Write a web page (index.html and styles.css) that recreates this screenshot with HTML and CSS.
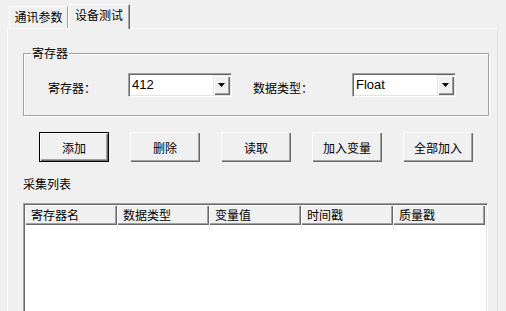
FILE: index.html
```html
<!DOCTYPE html>
<html lang="zh-CN">
<head>
<meta charset="utf-8">
<title>设备测试</title>
<link rel="stylesheet" href="styles.css">
</head>
<body>
<div class="window">
  <div class="tabs">
    <div class="tab">通讯参数</div>
    <div class="tab active">设备测试</div>
  </div>
  <div class="page">
    <div class="group">
      <div class="legend">寄存器</div>
      <div class="group-row">
        <span class="lbl lbl1">寄存器：</span>
        <div class="combo">
          <span class="combo-text">412</span>
          <span class="combo-btn"><svg width="7" height="4" viewBox="0 0 7 4"><polygon points="0,0 7,0 3.5,4" fill="#000"/></svg></span>
        </div>
        <span class="lbl lbl2">数据类型：</span>
        <div class="combo">
          <span class="combo-text">Float</span>
          <span class="combo-btn"><svg width="7" height="4" viewBox="0 0 7 4"><polygon points="0,0 7,0 3.5,4" fill="#000"/></svg></span>
        </div>
      </div>
    </div>
    <div class="buttons">
      <button class="btn default">添加</button>
      <button class="btn">删除</button>
      <button class="btn">读取</button>
      <button class="btn">加入变量</button>
      <button class="btn">全部加入</button>
    </div>
    <div class="caption">采集列表</div>
    <div class="list">
      <div class="list-header">
        <div class="col">寄存器名</div>
        <div class="col">数据类型</div>
        <div class="col">变量值</div>
        <div class="col">时间戳</div>
        <div class="col">质量戳</div>
        <div class="col col-rest"></div>
      </div>
      <div class="list-body"></div>
    </div>
  </div>
</div>
</body>
</html>
```

FILE: styles.css
```css
html, body {
  margin: 0;
  padding: 0;
  background: #f0f0f0;
}
body {
  font-family: "Noto Sans CJK SC", "Noto Sans", sans-serif;
  font-size: 12px;
  color: #000;
  overflow: hidden;
  width: 506px;
  height: 311px;
}
.window {
  padding-left: 7px;
  height: 311px;
  box-sizing: border-box;
}
.tabs {
  display: flex;
  align-items: flex-end;
  height: 28px;
  padding-left: 2px;
  position: relative;
  z-index: 1;
}
.tab {
  box-sizing: border-box;
  width: 59px;
  height: 22px;
  line-height: 20px;
  text-align: center;
  white-space: nowrap;
  border-top: 1px solid #fff;
  border-left: 1px solid #fff;
  border-right: 1px solid #a0a0a0;
  background: #f0f0f0;
}
.tab.active {
  width: 62px;
  height: 25px;
  margin-bottom: -1px;
  border-right: 1px solid #696969;
  box-shadow: inset -1px 0 #a0a0a0;
}
.page {
  box-sizing: border-box;
  width: 491px;
  height: 283px;
  border-top: 1px solid #fff;
  border-left: 1px solid #fff;
  border-right: 1px solid #e3e3e3;
  padding: 24px 8px 0 15px;
}
.group {
  box-sizing: border-box;
  width: 466px;
  height: 63px;
  border: 1px solid #a0a0a0;
  box-shadow: inset 1px 1px #fff, 1px 1px #fff;
}
.legend {
  width: fit-content;
  margin: -8px 0 0 7px;
  padding: 0 1px;
  line-height: 14px;
  background: #f0f0f0;
}
.group-row {
  display: flex;
  align-items: flex-start;
  margin-top: 13px;
  padding-left: 24px;
}
.lbl {
  line-height: 14px;
  margin-top: 8px;
  white-space: nowrap;
}
.lbl1 { width: 80px; }
.lbl2 { width: 99px; margin-left: 21px; }
.combo {
  box-sizing: border-box;
  display: flex;
  width: 104px;
  height: 24px;
  padding: 1px;
  background: #fff;
  border: 1px solid;
  border-color: #a0a0a0 #fff #fff #a0a0a0;
  box-shadow: inset 1px 1px #696969, inset -1px -1px #e3e3e3;
}
.combo-text {
  flex: 1;
  padding-left: 2px;
  font-family: "Liberation Sans", Arial, sans-serif;
  font-size: 13px;
  line-height: 20px;
}
.combo-btn {
  display: flex;
  align-items: center;
  justify-content: center;
  width: 17px;
  height: 20px;
  background: #f0f0f0;
  box-shadow: inset 1px 1px #e3e3e3, inset 2px 2px #fff, inset -1px -1px #696969, inset -2px -2px #a0a0a0;
}
.combo-btn svg { display: block; }
.buttons {
  display: flex;
  gap: 21px;
  margin: 16px 0 0 16px;
}
.btn {
  box-sizing: border-box;
  width: 70px;
  height: 30px;
  padding: 0;
  margin: 0;
  border: none;
  background: #f0f0f0;
  font-family: inherit;
  font-size: 12px;
  color: #000;
  box-shadow: inset 1px 1px #fff, inset -1px -1px #696969, inset -2px -2px #a0a0a0;
}
.btn.default {
  border: 1px solid #000;
}
.caption {
  margin-top: 15px;
  line-height: 14px;
}
.list {
  box-sizing: border-box;
  width: 465px;
  height: 120px;
  margin-top: 12px;
  background: #fff;
  border: 1px solid;
  border-color: #a0a0a0 #fff #fff #a0a0a0;
  box-shadow: inset 1px 1px #696969, inset -1px -1px #e3e3e3;
  padding: 1px;
}
.list-header {
  display: flex;
  height: 20px;
}
.col {
  box-sizing: border-box;
  width: 92px;
  flex: none;
  padding-left: 6px;
  line-height: 20px;
  background: #f0f0f0;
  white-space: nowrap;
  box-shadow: inset 1px 1px #fff, inset -1px -1px #696969, inset -2px -2px #a0a0a0;
}
.col-rest {
  flex: 1;
  width: auto;
  padding: 0;
  box-shadow: inset 1px 1px #fff;
}
.list-body {
  background: #fff;
}
```
